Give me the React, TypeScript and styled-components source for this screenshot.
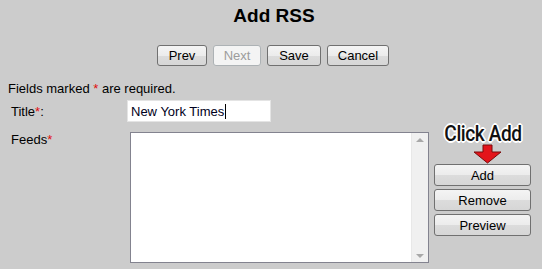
import styled, { createGlobalStyle } from "styled-components";

const Global = createGlobalStyle`
  html, body {
    margin: 0;
    padding: 0;
    background: #cccccc;
  }
  body {
    font-family: "Liberation Sans", Arial, sans-serif;
    font-size: 13px;
    color: #000;
  }
`;

const Page = styled.div`
  width: 542px;
  height: 269px;
  overflow: hidden;
  display: flex;
  flex-direction: column;
`;

const Heading = styled.h1`
  margin: 5px 0 0;
  height: 22px;
  line-height: 22px;
  text-align: center;
  font-size: 19px;
  font-weight: bold;
  padding-left: 6px;
`;

const Toolbar = styled.div`
  display: flex;
  justify-content: center;
  gap: 6px;
  margin-top: 18px;
  padding-left: 4px;
`;

const Button = styled.button<{ $w: number }>`
  width: ${({ $w }) => $w}px;
  height: 21px;
  padding: 0;
  font-family: "Liberation Sans", Arial, sans-serif;
  font-size: 13px;
  color: #000;
  border: 1px solid #707070;
  border-radius: 3px;
  background: linear-gradient(#f4f4f4 0%, #ececec 50%, #dcdcdc 51%, #d6d6d6 100%);
  &:disabled {
    color: #9c9c9c;
    border-color: #adb2b5;
    background: #f4f4f4;
  }
`;

const Note = styled.p`
  margin: 15px 0 0 8px;
  line-height: 15px;
`;

const Star = styled.span`
  color: #e01010;
`;

const Row = styled.div`
  display: flex;
  align-items: flex-start;
  margin-left: 11px;
`;

const Label = styled.label<{ $top: number }>`
  width: 116px;
  padding-top: ${({ $top }) => $top}px;
  line-height: 15px;
`;

const TitleInput = styled.div`
  width: 139px;
  height: 20px;
  border: 1px solid #e4e4e4;
  background: #fff;
  box-sizing: content-box;
  padding-left: 3px;
  line-height: 21px;
  font-size: 13px;
  color: #000020;
  display: flex;
  align-items: center;
`;

const Caret = styled.span`
  display: inline-block;
  width: 1px;
  height: 15px;
  background: #000;
  margin-left: 1px;
`;

const Feeds = styled.div`
  margin-left: 3px;
  width: 297px;
  height: 129px;
  border: 1px solid #83838f;
  background: #fff;
  display: flex;
  justify-content: flex-end;
`;

const Scroll = styled.div`
  width: 16px;
  background: #f0f0f0;
  border-left: 1px solid #e8e8e8;
  display: flex;
  flex-direction: column;
  justify-content: space-between;
  align-items: center;
  padding: 5px 0 4px;
`;

const Tri = styled.div<{ $up?: boolean }>`
  width: 0;
  height: 0;
  border-left: 4px solid transparent;
  border-right: 4px solid transparent;
  ${({ $up }) =>
    $up ? "border-bottom: 4px solid #a8a8a8;" : "border-top: 4px solid #a8a8a8;"}
`;

const Side = styled.div`
  margin-left: 5px;
  margin-top: -10px;
  display: flex;
  flex-direction: column;
  align-items: center;
  gap: 3px;
`;

const Hint = styled.div`
  position: relative;
  height: 39px;
  width: 97px;
`;

const HintText = styled.div`
  position: absolute;
  left: -6px;
  top: -1px;
  width: 110px;
  text-align: center;
  font-family: Roboto, "DejaVu Sans", sans-serif;
  font-weight: 500;
  font-size: 22px;
  letter-spacing: -0.5px;
  transform: scaleX(0.87);
  color: #111;
  text-shadow: -1px -1px 0 #fff, 1px -1px 0 #fff, -1px 1px 0 #fff,
    1px 1px 0 #fff, 0 2px 0 #fff, 2px 0 0 #fff, -2px 0 0 #fff, 0 -2px 0 #fff;
`;

const Arrow = styled.svg`
  position: absolute;
  left: 39px;
  top: 22px;
  z-index: 1;
`;

const SideButton = styled(Button)`
  height: 22px;
`;

export default function App() {
  return (
    <Page>
      <Global />
      <Heading>Add RSS</Heading>
      <Toolbar>
        <Button $w={50}>Prev</Button>
        <Button $w={48} disabled>
          Next
        </Button>
        <Button $w={54}>Save</Button>
        <Button $w={62}>Cancel</Button>
      </Toolbar>
      <Note>
        Fields marked <Star>*</Star> are required.
      </Note>
      <Row style={{ marginTop: 4 }}>
        <Label $top={4}>
          Title<Star>*</Star>:
        </Label>
        <TitleInput>
          New York Times
          <Caret />
        </TitleInput>
      </Row>
      <Row style={{ marginTop: 10 }}>
        <Label $top={0}>
          Feeds<Star>*</Star>
        </Label>
        <Feeds>
          <Scroll>
            <Tri $up />
            <Tri />
          </Scroll>
        </Feeds>
        <Side>
          <Hint>
            <HintText>Click Add</HintText>
            <Arrow width="30" height="20" viewBox="0 0 30 20">
              <path
                d="M10 1 H19 V8 H28 L14.5 19 L1 8 H10 Z"
                fill="#e3141b"
                stroke="#7a0a0a"
                strokeWidth="1"
              />
            </Arrow>
          </Hint>
          <SideButton $w={97}>Add</SideButton>
          <SideButton $w={97}>Remove</SideButton>
          <SideButton $w={97}>Preview</SideButton>
        </Side>
      </Row>
    </Page>
  );
}
